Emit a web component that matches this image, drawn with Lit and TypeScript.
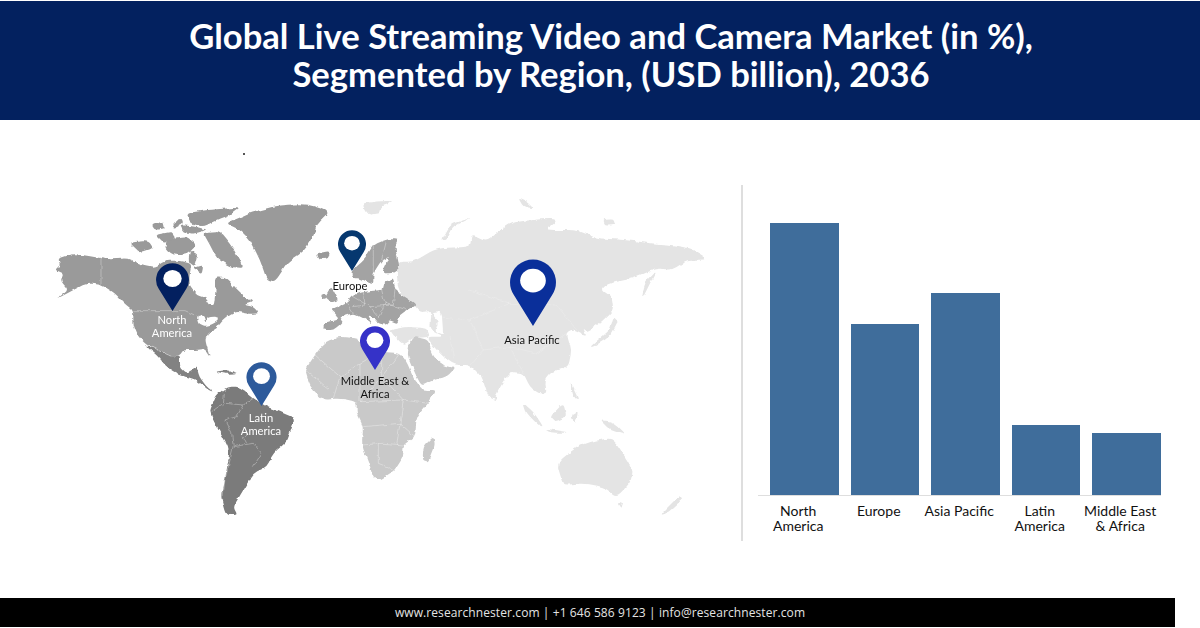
import { LitElement, html, svg, css } from 'lit';
import { customElement } from 'lit/decorators.js';

// Land shapes are traced from 3x crops, so every group keeps its crop's origin.
const americas = {
    canada: '55,205 95,192 130,195 183,205 215,208 265,205 300,222 345,232 375,212 420,212 455,222 448,258 450,290 470,315 498,325 510,345 522,345 527,300 525,262 560,265 590,300 612,320 640,335 612,345 640,350 657,370 630,372 590,365 565,378 545,395 530,415 505,430 495,450 510,500 495,477 465,480 430,480 420,495 395,500 345,475 320,465 295,440 280,405 280,362 250,338 225,310 185,285 140,280 100,300 50,327 85,300 62,272 70,252 45,240 60,225',
    greenland: '558,100 600,82 640,65 720,45 800,42 870,65 830,105 820,140 790,185 745,215 705,275 680,268 660,210 630,150 600,120',
    iceland: '830,190 870,183 865,205 840,208',
    mexico: '320,468 345,475 395,500 420,495 420,530 440,550 470,530 478,560 500,590 520,605 505,600 470,570 440,560 400,545 375,525 350,495 330,480',
    south: '510,660 530,615 560,590 600,590 640,625 680,650 720,665 765,685 750,730 740,755 700,790 680,830 640,850 610,900 580,950 592,975 560,975 545,920 555,870 570,780 530,710 515,680',
};
const arctic = [
    '440,70 500,60 600,52 570,75 530,90 490,110 450,100',
    '420,105 470,110 500,120 460,132 430,125',
    '380,150 440,140 470,165 440,195 400,195 375,175',
    '345,135 395,125 410,145 370,160',
    '268,158 325,152 340,175 300,187',
    '490,130 540,125 580,175 610,235 570,230 530,205 510,165',
    '450,180 475,195 465,230 445,215',
    '460,235 490,225 485,250',
    '395,100 425,85 430,100 405,115',
    '335,105 370,95 375,115 345,120',
];
const caribbean = ['525,545 560,540 595,550 560,552', '565,540 585,545 580,550'];
const lakes = ['470,378 490,376 496,395 505,382 530,380 535,392 512,405 495,408 475,400'];
const naBorders = [
    '183,205 183,285',
    '280,362 435,362 470,378',
    '320,465 345,475 395,500',
];
const saBorders = [
    '555,590 550,640 515,665',
    '555,640 610,645 640,625',
    '610,645 590,680 555,690 575,730 580,770 640,760 665,790 640,830',
    '580,770 555,870 548,930',
    '620,760 610,740 630,720',
];

const europe = {
    main: '62,358 110,340 125,318 160,305 215,300 220,280 250,262 255,300 285,320 320,345 290,362 268,380 262,400 238,390 225,405 205,400 195,385 170,375 190,405 160,385 130,370 100,378 85,385 100,395 70,420 40,420 42,398 85,390 80,375',
    nordic: '125,265 125,240 165,205 190,165 230,148 265,148 255,170 265,210 268,235 245,250 215,250 238,200 215,210 190,250 190,285 150,265',
    uk: '45,320 62,292 70,300 85,330 65,338',
    ireland: '30,318 45,308 52,322 35,328',
    svalbard: '155,40 200,35 245,32 235,42 215,50 210,70 175,75',
};
const euBorders = [
    '110,340 130,370',
    '125,318 180,350 210,385',
    '160,305 165,345 130,350',
    '215,300 225,340 290,360',
    '180,350 250,345 255,300',
    '225,340 205,385',
    '190,250 190,165',
    '215,210 230,150',
];

const africa = {
    main: '15,150 45,105 75,65 120,50 170,55 200,80 245,95 300,100 320,125 345,185 370,210 410,210 385,250 350,290 345,350 310,375 310,410 285,450 240,480 220,475 205,425 185,375 190,320 170,280 170,245 120,235 70,240 30,200',
    arabia: '322,105 330,65 345,50 385,60 400,110 430,135 465,145 440,170 400,180 365,198 345,160',
    madagascar: '400,350 405,375 385,425 368,420 370,380',
};
const afBorders = [
    '45,105 120,170 100,235',
    '120,170 180,130 245,95',
    '180,130 180,245',
    '245,95 245,170 300,100',
    '245,170 310,240 385,250',
    '180,245 310,240 300,310 345,350',
    '190,320 300,310',
    '185,375 250,370 310,375',
    '235,370 235,430 285,450',
    '300,310 290,375',
    '245,170 180,245',
    '15,150 90,210',
];

const asia = {
    main: '80,250 85,215 130,215 200,175 300,170 305,135 350,155 385,125 430,95 550,85 555,100 525,120 620,120 680,145 770,150 840,160 910,165 960,175 1005,200 1005,212 950,212 905,240 860,235 790,265 720,280 695,300 725,320 730,360 690,400 650,425 640,415 650,440 610,420 590,430 605,480 595,530 545,545 525,570 530,610 505,610 480,590 460,550 420,545 385,600 375,630 355,620 335,560 300,525 255,525 225,505 195,475 170,440 220,440 180,420 185,365 150,370 130,345 85,300',
    turkey: '60,420 110,410 170,415 180,440 130,445 100,465 70,435',
    australia: '560,820 620,770 680,750 730,745 790,840 780,880 740,920 700,890 640,880 580,885',
    nz: '870,975 930,915 938,930 895,970',
    tasmania: '745,940 760,940 755,955',
    japan: '660,470 720,420 730,380 745,395 720,440 670,470',
    sakhalin: '815,330 825,275 860,240 835,290',
    novaya: '215,150 240,105 310,80 250,110 230,150',
    severnaya: '445,25 470,35 490,55 460,50',
    sumatra: '460,640 490,665 520,710 505,705 470,670',
    borneo: '540,680 580,640 590,680 555,695',
    java: '520,715 600,728 540,728',
    celebes: '600,680 625,665 615,700',
    guinea: '690,690 730,695 770,735 720,720',
    philippines: '600,570 630,630 610,620',
    sri: '370,620 382,625 375,635',
    arctic1: '700,90 730,88 735,102 705,104',
};
const asBorders = [
    '300,300 420,340 560,345 620,420',
    '200,380 300,390 420,340',
    '300,390 340,480 420,470 500,490 590,430',
    '420,470 460,550',
    '340,480 300,525',
    '240,440 250,505',
];

// rounds every corner so the traced points read as coastline, not as facets
const outline = (points: string) => {
    const p = points.split(' ').map((pair) => pair.split(',').map(Number));
    const n = p.length;
    const at = (a: number[], b: number[], t: number) => `${a[0] + (b[0] - a[0]) * t} ${a[1] + (b[1] - a[1]) * t}`;
    let d = '';
    p.forEach((cur, i) => {
        const prev = p[(i + n - 1) % n];
        const next = p[(i + 1) % n];
        d += `${i === 0 ? 'M' : 'L'}${at(cur, prev, 0.3)} Q${cur[0]} ${cur[1]} ${at(cur, next, 0.3)} `;
    });
    return d + 'Z';
};

const poly = (points: string, cls: string) => svg`<path class=${cls} d=${outline(points)}></path>`;
const line = (points: string) => svg`<polyline class="border" points=${points}></polyline>`;
const faint = (points: string) => svg`<polyline class="border faint" points=${points}></polyline>`;

const pins = [
    { x: 156, y: 263, w: 33, h: 48, color: '#03205f' },
    { x: 338, y: 230, w: 28, h: 41, color: '#06386f' },
    { x: 510, y: 259, w: 46, h: 67, color: '#0a2f9a' },
    { x: 246, y: 362, w: 31, h: 44, color: '#2d5a9b' },
    { x: 360, y: 326, w: 30, h: 44, color: '#3532c8' },
];

const mapLabels = [
    { text: 'North\nAmerica', x: 172, y: 313, light: true },
    { text: 'Europe', x: 350, y: 279, light: false },
    { text: 'Asia Pacific', x: 532, y: 333, light: false },
    { text: 'Latin\nAmerica', x: 261, y: 411, light: true },
    { text: 'Middle East &\nAfrica', x: 375, y: 374, light: false },
];

const bars = [
    { label: 'North\nAmerica', height: 272 },
    { label: 'Europe', height: 171 },
    { label: 'Asia Pacific', height: 202 },
    { label: 'Latin\nAmerica', height: 70 },
    { label: 'Middle East\n& Africa', height: 62 },
];

@customElement('app-root')
export class AppRoot extends LitElement {
    static styles = css`
        :host {
            display: block;
            width: 1200px;
            height: 628px;
            overflow: hidden;
            background: #fff;
            font-family: Lato, 'Liberation Sans', sans-serif;
        }

        .header {
            box-sizing: border-box;
            margin-top: 1px;
            height: 119px;
            padding: 0 0 12px 22px;
            display: flex;
            align-items: center;
            justify-content: center;
            background: #03215f;
            color: #fff;
        }

        h1 {
            margin: 0;
            font-size: 34.6px;
            font-weight: 700;
            line-height: 38px;
            text-align: center;
        }

        .main {
            display: flex;
            height: 478px;
        }

        .map {
            position: relative;
            width: 741px;
            height: 478px;
        }

        .map svg.land {
            position: absolute;
            inset: 0;
        }

        .stray {
            position: absolute;
            left: 243px;
            top: 33px;
            width: 2px;
            height: 2px;
            background: #555;
        }

        .pin {
            position: absolute;
            display: block;
        }

        .map-label {
            position: absolute;
            transform: translateX(-50%);
            font-size: 11.2px;
            line-height: 13px;
            text-align: center;
            white-space: pre;
            color: #111;
        }

        .map-label.light {
            color: #fff;
        }

        .n-america { fill: #9a9a9a; }
        .eu { fill: #a3a3a3; }
        .s-america { fill: #7b7b7b; }
        .mexico { fill: #828282; }
        .af { fill: #c9c9c9; }
        .as { fill: #e4e4e4; }
        .water { fill: #fff; }
        .border {
            fill: none;
            stroke: #fff;
            stroke-width: 1.5;
            opacity: 0.65;
        }
        .border.faint {
            opacity: 0.35;
        }

        .chart {
            margin-top: 65px;
            height: 356px;
            border-left: 2px solid #dedede;
            padding-left: 15px;
        }

        .plot {
            display: flex;
            align-items: flex-end;
            gap: 12px;
            box-sizing: border-box;
            width: 403px;
            height: 311px;
            padding-left: 12px;
            border-bottom: 1px solid #dedede;
        }

        .bar {
            flex: none;
            width: 68.5px;
            background: #3f6d9b;
        }

        .names {
            display: flex;
            padding-top: 7px;
        }

        .name {
            flex: none;
            width: 80.5px;
            font-size: 14px;
            line-height: 15px;
            text-align: center;
            white-space: pre;
            color: #111;
        }

        .footer {
            box-sizing: border-box;
            width: 1175px;
            height: 29px;
            padding-left: 25px;
            display: flex;
            align-items: center;
            justify-content: center;
            background: #000;
            color: #e4e4e4;
            font-family: 'Open Sans', sans-serif;
            font-size: 12px;
            letter-spacing: 0.09px;
        }
    `;

    private renderLand() {
        return html`
            <svg class="land" width="741" height="478" viewBox="0 120 741 478">
                <defs>
                    <filter id="coast" filterUnits="userSpaceOnUse" x="0" y="120" width="741" height="478" color-interpolation-filters="sRGB">
                        <feTurbulence type="fractalNoise" baseFrequency="0.14" numOctaves="3" seed="4" result="noise"></feTurbulence>
                        <feDisplacementMap in="SourceGraphic" in2="noise" scale="4" xChannelSelector="R" yChannelSelector="G"></feDisplacementMap>
                        <feGaussianBlur stdDeviation="0.35"></feGaussianBlur>
                    </filter>
                </defs>
                <g filter="url(#coast)">
                    <g transform="translate(40 190) scale(0.3333)">
                        ${poly(americas.greenland, 'n-america')}
                        ${poly(americas.iceland, 'n-america')}
                        ${poly(americas.canada, 'n-america')}
                        ${arctic.map((p) => poly(p, 'n-america'))}
                        ${lakes.map((p) => poly(p, 'water'))}
                        ${poly(americas.mexico, 'mexico')}
                        ${caribbean.map((p) => poly(p, 'mexico'))}
                        ${poly(americas.south, 's-america')}
                        ${naBorders.map(line)}
                        ${saBorders.map(line)}
                    </g>
                    <g transform="translate(370 190) scale(0.3333)">
                        ${Object.values(asia).map((p) => poly(p, 'as'))}
                        ${poly('185,370 215,365 220,435 195,425 205,395', 'water')}
                        ${asBorders.map(faint)}
                    </g>
                    <g transform="translate(310 190) scale(0.3333)">
                        ${poly(europe.svalbard, 'as')}
                        ${poly(europe.nordic, 'eu')}
                        ${poly(europe.main, 'eu')}
                        ${poly(europe.uk, 'eu')}
                        ${poly(europe.ireland, 'eu')}
                        ${euBorders.map(line)}
                    </g>
                    <g transform="translate(300 320) scale(0.3333)">
                        ${Object.values(africa).map((p) => poly(p, 'af'))}
                        ${afBorders.map(line)}
                    </g>
                </g>
            </svg>
        `;
    }

    private renderPin(pin: (typeof pins)[number]) {
        return html`
            <svg
                class="pin"
                style="left:${pin.x}px;top:${pin.y - 120}px"
                width=${pin.w}
                height=${pin.h}
                viewBox="0 0 100 146"
            >
                <path fill=${pin.color} d="M50 146 L8 78 A50 50 0 1 1 92 78 Z"></path>
                <ellipse fill="#fff" cx="50" cy="47" rx="28" ry="26"></ellipse>
            </svg>
        `;
    }

    render() {
        return html`
            <div class="header">
                <h1>Global Live Streaming Video and Camera Market (in %),<br />Segmented by Region, (USD billion), 2036</h1>
            </div>
            <div class="main">
                <div class="map">
                    ${this.renderLand()}
                    <span class="stray"></span>
                    ${pins.map((p) => this.renderPin(p))}
                    ${mapLabels.map(
                        (l) => html`<div
                            class="map-label ${l.light ? 'light' : ''}"
                            style="left:${l.x}px;top:${l.y - 120}px"
                        >${l.text}</div>`
                    )}
                </div>
                <div class="chart">
                    <div class="plot">
                        ${bars.map((b) => html`<div class="bar" style="height:${b.height}px"></div>`)}
                    </div>
                    <div class="names">
                        ${bars.map((b) => html`<div class="name">${b.label}</div>`)}
                    </div>
                </div>
            </div>
            <div class="footer">www.researchnester.com | +1 646 586 9123 | info@researchnester.com</div>
        `;
    }
}
